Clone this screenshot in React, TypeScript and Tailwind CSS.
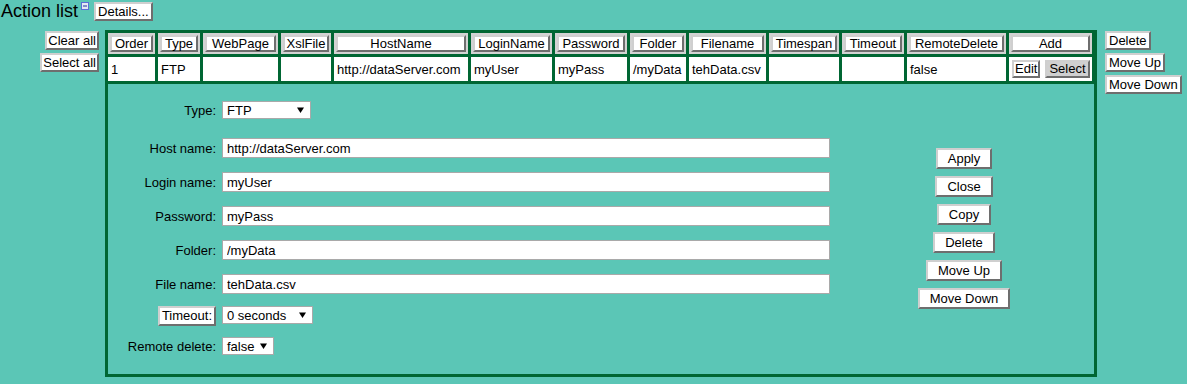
import React from "react";

const border =
  "text-black border-2 border-t-[#cfcfcf] border-l-[#cfcfcf] border-r-[#6e6e6e] border-b-[#6e6e6e] text-[13px] whitespace-nowrap";
const btn = "bg-white " + border;
const smallBtn = btn + " leading-[15px] px-[2px]";
const panelBtn = btn + " leading-[15px] py-[1px] px-[10px]";

const headers = [
  "Order",
  "Type",
  "WebPage",
  "XslFile",
  "HostName",
  "LoginName",
  "Password",
  "Folder",
  "Filename",
  "Timespan",
  "Timeout",
  "RemoteDelete",
  "Add",
];

const row = [
  "1",
  "FTP",
  "",
  "",
  "http://dataServer.com",
  "myUser",
  "myPass",
  "/myData",
  "tehData.csv",
  "",
  "",
  "false",
];

function Arrow() {
  return (
    <svg width="7" height="6" viewBox="0 0 7 6" className="shrink-0">
      <polygon points="0,0.5 7,0.5 3.5,6" fill="#000" />
    </svg>
  );
}

function FakeSelect({ value, w }: { value: string; w: string }) {
  return (
    <div
      className={
        "h-[18px] bg-white border border-[#a9a9a9] pl-[4px] pr-[6px] flex items-center justify-between text-[13px] leading-[15px] " +
        w
      }
    >
      <span>{value}</span>
      <Arrow />
    </div>
  );
}

function Field({ label, value }: { label: string; value: string }) {
  return (
    <div className="flex items-center h-[20px]">
      <div className="w-[108px] text-right text-[13px] leading-[15px]">{label}</div>
      <input
        readOnly
        value={value}
        className="ml-[6px] w-[608px] h-[20px] bg-white border border-[#a9a9a9] px-[4px] text-[13px] text-black outline-none font-['Liberation_Sans',Arial,sans-serif]"
      />
    </div>
  );
}

export default function App() {
  return (
    <div className="w-[1187px] h-[384px] overflow-hidden bg-[#5bc6b6] text-black font-['Liberation_Sans',Arial,sans-serif]">
      <div className="flex items-start h-[30px]">
        <span className="pl-[1px] pt-[1px] text-[18px] leading-[21px]">Action list</span>
        <svg width="9" height="9" viewBox="0 0 9 9" className="ml-[3px] mt-[2px]">
          <rect x="0.5" y="0.5" width="7" height="7" fill="#e4e8f4" stroke="#5b6fd6" />
          <line x1="2" y1="4" x2="6" y2="4" stroke="#1f2f9a" strokeWidth="1" />
        </svg>
        <button className={smallBtn + " ml-[4px] mt-[2px]"}>Details...</button>
      </div>

      <div className="flex items-start">
        <div className="w-[99px] flex flex-col items-end gap-[3px] pt-[1px]">
          <button className={btn + " leading-[15px] px-[1px]"}>Clear all</button>
          <button className={btn + " leading-[15px] px-[1px]"}>Select all</button>
        </div>

        <div className="ml-[6px] w-[992px] border-[3px] border-[#006633] bg-[#5bc6b6]">
          <div className="grid grid-cols-[47px_42px_75px_50px_134px_81px_72px_56px_77px_70px_62px_99px_83px] grid-rows-[21px_24px] gap-[3px] bg-[#006633] pb-[3px] pr-[2px]">
            {headers.map((h) => (
              <div key={h} className="bg-[#d3d3d3] p-[2px] flex">
                <button className={btn + " w-full leading-[13px] px-[1px]"}>{h}</button>
              </div>
            ))}
            {row.map((v, i) => (
              <div
                key={i}
                className="bg-white flex items-center pl-[3px] text-[13px] leading-[15px] whitespace-nowrap overflow-hidden"
              >
                {v}
              </div>
            ))}
            <div className="bg-white flex items-center pl-[3px] gap-[5px]">
              <button className={btn + " leading-[14px] px-[1px]"}>Edit</button>
              <button className={"bg-[#d0d0d0] " + border + " leading-[14px] px-[2px]"}>Select</button>
            </div>
          </div>

          <div className="flex h-[290px] pt-[17px]">
            <div className="flex flex-col">
              <div className="flex items-center h-[18px]">
                <div className="w-[108px] text-right text-[13px] leading-[15px]">Type:</div>
                <div className="ml-[6px]">
                  <FakeSelect value="FTP" w="w-[89px]" />
                </div>
              </div>
              <div className="mt-[19px] flex flex-col gap-[14px]">
                <Field label="Host name:" value="http://dataServer.com" />
                <Field label="Login name:" value="myUser" />
                <Field label="Password:" value="myPass" />
                <Field label="Folder:" value="/myData" />
                <Field label="File name:" value="tehData.csv" />
              </div>
              <div className="mt-[12px] flex items-start h-[20px]">
                <div className="w-[108px] flex justify-end">
                  <button className={smallBtn + " leading-[16px]"}>Timeout:</button>
                </div>
                <div className="ml-[6px]">
                  <FakeSelect value="0 seconds" w="w-[91px]" />
                </div>
              </div>
              <div className="mt-[11px] flex items-center h-[18px]">
                <div className="w-[108px] text-right text-[13px] leading-[15px]">Remote delete:</div>
                <div className="ml-[6px]">
                  <FakeSelect value="false" w="w-[52px]" />
                </div>
              </div>
            </div>

            <div className="ml-[4px] w-[260px] flex flex-col items-center gap-[7px] pt-[47px]">
              <button className={panelBtn}>Apply</button>
              <button className={panelBtn}>Close</button>
              <button className={panelBtn}>Copy</button>
              <button className={panelBtn}>Delete</button>
              <button className={panelBtn}>Move Up</button>
              <button className={panelBtn}>Move Down</button>
            </div>
          </div>
        </div>

        <div className="ml-[8px] flex flex-col items-start gap-[3px] pt-[1px]">
          <button className={smallBtn}>Delete</button>
          <button className={smallBtn}>Move Up</button>
          <button className={smallBtn}>Move Down</button>
        </div>
      </div>
    </div>
  );
}
